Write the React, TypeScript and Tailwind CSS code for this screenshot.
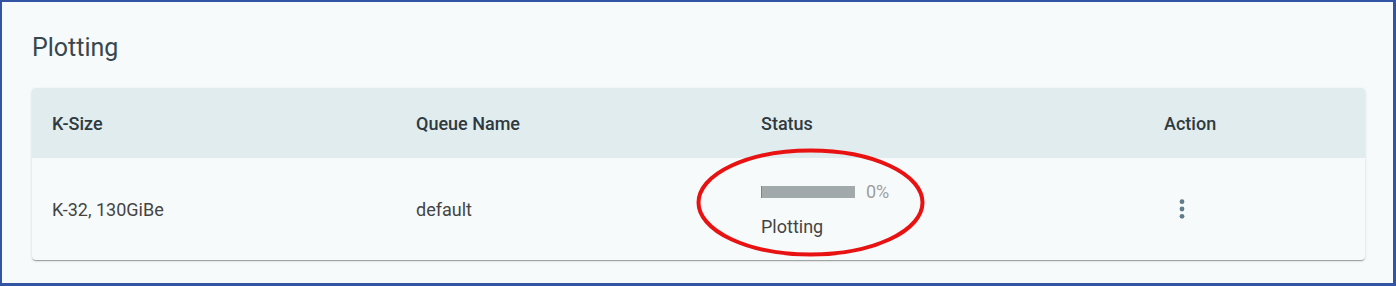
const columns = [
  { label: 'K-Size', width: 'w-[364px]' },
  { label: 'Queue Name', width: 'w-[345px]' },
  { label: 'Status', width: 'w-[403px]' },
  { label: 'Action', width: 'flex-1' },
]

function MoreIcon() {
  return (
    <svg width="10" height="24" viewBox="0 0 10 24" className="fill-[#607d8b]">
      <circle cx="5" cy="4.7" r="2.4" />
      <circle cx="5" cy="12" r="2.4" />
      <circle cx="5" cy="19.3" r="2.4" />
    </svg>
  )
}

export default function App() {
  return (
    <div
      className="relative w-[1396px] h-[286px] bg-[#f6fafb] border-l-2 border-t-2 border-r-[3px] border-b-[3px] border-[#3353a3] text-[#333] overflow-hidden"
      style={{ fontFamily: 'Roboto, "Liberation Sans", sans-serif' }}
    >
      <div className="pl-[30px] pt-[30px]">
        <h2 className="text-[25px] leading-[32px] font-normal text-[#37474f]">Plotting</h2>

        <div className="mt-6 w-[1333px] rounded bg-[#f7fafb] shadow-[0_2px_1px_-1px_rgba(0,0,0,0.2),0_1px_1px_0_rgba(0,0,0,0.14),0_1px_3px_0_rgba(0,0,0,0.12)] overflow-hidden">
          <div className="flex h-[70px] items-center bg-[#e1ecee]">
            {columns.map((c) => (
              <div key={c.label} className={`${c.width} px-5 text-[18px] font-medium text-[#2f3a40]`}>
                {c.label}
              </div>
            ))}
          </div>

          <div className="flex h-[102px] items-center text-[18px] text-[#444]">
            <div className="w-[364px] px-5">K-32, 130GiBe</div>
            <div className="w-[345px] px-5">default</div>
            <div className="w-[403px] px-5 self-start pt-[28px]">
              <div className="flex items-center h-3">
                <div className="w-[94px] h-3 bg-[#a2a9ab] border-l border-[#7c8486]" />
                <span className="ml-[11px] text-[#9e9e9e] leading-none">0%</span>
              </div>
              <div className="mt-[17px] leading-6 text-[#444]">Plotting</div>
            </div>
            <div className="flex-1 pl-[33px]">
              <MoreIcon />
            </div>
          </div>
        </div>
      </div>

      <svg className="absolute left-[691px] top-[143px]" width="236" height="116" viewBox="0 0 236 116">
        <ellipse cx="117.5" cy="57.5" rx="112" ry="52" fill="none" stroke="#e81212" strokeWidth="4" />
      </svg>
    </div>
  )
}
